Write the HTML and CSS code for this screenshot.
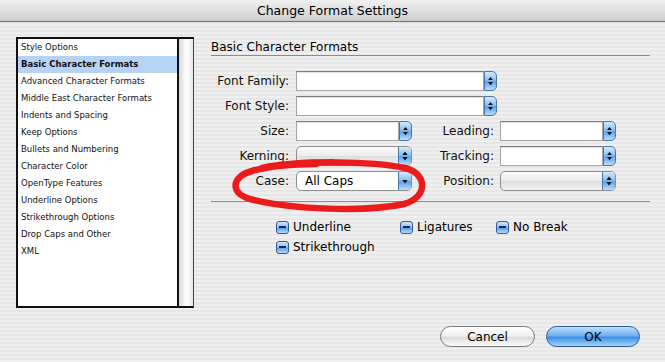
FILE: index.html
```html
<!DOCTYPE html>
<html>
<head>
  <title>Change Format Settings</title>
  <meta name="viewport" content="width=device-width, initial-scale=1">
  <link rel="stylesheet" href="styles.css">
</head>
<body>
  <div class="window">
    <div class="titlebar">Change Format Settings</div>

    <div class="content">
      <!-- category list on the left -->
      <div class="sidebar">
        <ul class="categories">
          <li>Style Options</li>
          <li class="selected">Basic Character Formats</li>
          <li>Advanced Character Formats</li>
          <li>Middle East Character Formats</li>
          <li>Indents and Spacing</li>
          <li>Keep Options</li>
          <li>Bullets and Numbering</li>
          <li>Character Color</li>
          <li>OpenType Features</li>
          <li>Underline Options</li>
          <li>Strikethrough Options</li>
          <li>Drop Caps and Other</li>
          <li>XML</li>
        </ul>
        <div class="scroll-track"></div>
      </div>

      <!-- settings panel -->
      <div class="panel">
        <h2 class="panel-title">Basic Character Formats</h2>

        <div class="form">
          <div class="row">
            <label class="label">Font Family:</label>
            <div class="field wide">
              <span class="input"></span>
              <span class="stepper"><svg viewBox="0 0 12 18" width="12" height="18"><path d="M6 4.5 L8.6 8 H3.4Z M6 13.5 L8.6 10 H3.4Z"/></svg></span>
            </div>
          </div>
          <div class="row">
            <label class="label">Font Style:</label>
            <div class="field wide">
              <span class="input"></span>
              <span class="stepper"><svg viewBox="0 0 12 18" width="12" height="18"><path d="M6 4.5 L8.6 8 H3.4Z M6 13.5 L8.6 10 H3.4Z"/></svg></span>
            </div>
          </div>
          <div class="row">
            <label class="label">Size:</label>
            <div class="field small">
              <span class="input"></span>
              <span class="stepper"><svg viewBox="0 0 12 18" width="12" height="18"><path d="M6 4.5 L8.6 8 H3.4Z M6 13.5 L8.6 10 H3.4Z"/></svg></span>
            </div>
            <label class="label second">Leading:</label>
            <div class="field small">
              <span class="input"></span>
              <span class="stepper"><svg viewBox="0 0 12 18" width="12" height="18"><path d="M6 4.5 L8.6 8 H3.4Z M6 13.5 L8.6 10 H3.4Z"/></svg></span>
            </div>
          </div>
          <div class="row">
            <label class="label">Kerning:</label>
            <div class="field small popup disabled">
              <span class="value"></span>
              <span class="stepper"><svg viewBox="0 0 12 18" width="12" height="18"><path d="M6 4.5 L8.6 8 H3.4Z M6 13.5 L8.6 10 H3.4Z"/></svg></span>
            </div>
            <label class="label second">Tracking:</label>
            <div class="field small">
              <span class="input"></span>
              <span class="stepper"><svg viewBox="0 0 12 18" width="12" height="18"><path d="M6 4.5 L8.6 8 H3.4Z M6 13.5 L8.6 10 H3.4Z"/></svg></span>
            </div>
          </div>
          <div class="row">
            <label class="label">Case:</label>
            <div class="field small popup">
              <span class="value">All Caps</span>
              <span class="stepper"><svg viewBox="0 0 12 18" width="12" height="18"><path d="M3.4 8 H8.6 L6 11.5Z"/></svg></span>
            </div>
            <label class="label second">Position:</label>
            <div class="field small popup disabled">
              <span class="value"></span>
              <span class="stepper"><svg viewBox="0 0 12 18" width="12" height="18"><path d="M6 4.5 L8.6 8 H3.4Z M6 13.5 L8.6 10 H3.4Z"/></svg></span>
            </div>
          </div>
        </div>

        <div class="options">
          <div class="option-row">
            <span class="check first"><span class="box"></span>Underline</span>
            <span class="check second"><span class="box"></span>Ligatures</span>
            <span class="check"><span class="box"></span>No Break</span>
          </div>
          <div class="option-row">
            <span class="check"><span class="box"></span>Strikethrough</span>
          </div>
        </div>

        <div class="buttons">
          <button class="btn cancel">Cancel</button>
          <button class="btn ok">OK</button>
        </div>
      </div>
    </div>

    <!-- hand drawn red mark round the Case popup -->
    <svg class="scribble" width="665" height="362" viewBox="0 0 665 362">
      <path d="M262 168 C300 160, 372 161, 405 168 C427 173, 429 197, 404 204 C368 212, 292 210, 250 199 C229 193, 232 176, 252 171 C270 166, 292 164, 316 164"/>
    </svg>
  </div>
</body>
</html>
```

FILE: styles.css
```css
/* page + window */
body {
  margin: 0;
  font-family: "DejaVu Sans", "Liberation Sans", sans-serif;
  color: #000;
}

.window {
  position: relative;
  width: 665px;
  height: 362px;
  overflow: hidden;
  display: flex;
  flex-direction: column;
  background: repeating-linear-gradient(#efefef 0, #efefef 2px, #e7e7e7 2px, #e7e7e7 4px);
}

/* title bar */
.titlebar {
  height: 21px;
  line-height: 21px;
  border-bottom: 1px solid #6e6e6e;
  background: linear-gradient(#f0f0f0, #dcdcdc 60%, #cdcdcd);
  text-align: center;
  font-size: 12.5px;
}

.content {
  flex: 1;
  display: flex;
}

/* category list */
.sidebar {
  box-sizing: border-box;
  width: 178px;
  height: 271px;
  margin: 15px 0 0 16px;
  display: flex;
  border: 2px solid #111;
  border-right: 1px solid #444;
  background: #fff;
}

.categories {
  flex: 1;
  list-style: none;
  margin: 0;
  padding: 0;
  border-right: 2px solid #111;
  font-size: 8.5px;
}

.categories li {
  height: 17px;
  line-height: 17px;
  padding-left: 3px;
  color: #111;
}

.categories li.selected {
  background: #b6d2f4;
  font-weight: bold;
}

.scroll-track {
  width: 14px;
  background: linear-gradient(90deg, #d6d6d6, #f7f7f7 40%, #ffffff 60%, #e8e8e8);
}

/* settings panel */
.panel {
  flex: 1;
  display: flex;
  flex-direction: column;
  margin: 0 15px 0 17px;
}

.panel-title {
  margin: 18px 0 0;
  font-size: 12px;
  font-weight: normal;
  line-height: 15px;
  border-bottom: 1px solid #8c8c8c;
}

.form {
  display: flex;
  flex-direction: column;
  gap: 5px;
  margin-top: 15px;
  padding-bottom: 10px;
  border-bottom: 1px solid #8c8c8c;
}

.row {
  display: flex;
  align-items: center;
  height: 20px;
}

.label {
  width: 78px;
  margin-right: 7px;
  text-align: right;
  font-size: 12px;
  color: #111;
}

.label.second {
  width: 82px;
  margin-left: 0;
  margin-right: 6px;
}

.field {
  box-sizing: border-box;
  height: 20px;
  display: flex;
}

.field.wide {
  width: 201px;
}

.field.small {
  width: 116px;
}

.field .input {
  flex: 1;
  background: #fff;
  border: 1px solid #a6a6a6;
  border-top-color: #7a7a7a;
  box-shadow: inset 0 1px 1px rgba(0, 0, 0, 0.12);
}

.stepper {
  box-sizing: border-box;
  width: 13px;
  height: 20px;
  display: flex;
  align-items: center;
  justify-content: center;
  border: 1px solid #4a76a8;
  border-radius: 0 5px 5px 0;
  background: linear-gradient(#d4eafd, #8cc0f2 45%, #5f9fe8 55%, #b9defc);
}

.stepper svg {
  fill: #111;
}

/* popup menus */
.field.popup {
  border: 1px solid #8e8e8e;
  border-radius: 5px;
  overflow: hidden;
  background: #fff;
}

.field.popup .value {
  flex: 1;
  padding-left: 8px;
  font-size: 12px;
  line-height: 18px;
}

.field.popup .stepper {
  height: 18px;
  border: none;
  border-left: 1px solid #4a76a8;
  border-radius: 0;
}

.field.popup.disabled {
  background: linear-gradient(#fbfbfb, #ececec 50%, #dedede 52%, #f2f2f2);
}

/* checkboxes */
.options {
  display: flex;
  flex-direction: column;
  margin-top: 15px;
  padding-left: 65px;
}

.option-row {
  display: flex;
  height: 20px;
  align-items: center;
}

.check {
  display: flex;
  align-items: center;
  gap: 4px;
  font-size: 12px;
}

.check.first {
  width: 124px;
}

.check.second {
  width: 96px;
}

.box {
  position: relative;
  box-sizing: border-box;
  width: 13px;
  height: 13px;
  border: 1px solid #34598a;
  border-radius: 3px;
  background: linear-gradient(#cfe7fd, #86bdf2 50%, #5d9de6 55%, #b6dbfb);
}

.box::after {
  content: "";
  position: absolute;
  left: 2px;
  top: 4px;
  width: 7px;
  height: 2px;
  background: #16284d;
}

/* buttons */
.buttons {
  margin-top: auto;
  display: flex;
  justify-content: flex-end;
  gap: 11px;
  padding: 0 10px 15px 0;
}

.btn {
  height: 21px;
  border-radius: 11px;
  font-family: "DejaVu Sans", "Liberation Sans", sans-serif;
  font-size: 12px;
  color: #000;
  padding: 0;
}

.btn.cancel {
  width: 95px;
  border: 1px solid #777;
  background: linear-gradient(#ffffff, #f1f1f1 45%, #dcdcdc 55%, #fbfbfb);
}

.btn.ok {
  width: 94px;
  border: 1px solid #2d5b92;
  background: linear-gradient(#bfe0fd, #6fb0f0 45%, #3d8fe6 55%, #a6d6ff);
}

/* red marker scribble */
.scribble {
  position: absolute;
  left: 0;
  top: 0;
  pointer-events: none;
}

.scribble path {
  fill: none;
  stroke: #ec1010;
  stroke-width: 6.5;
  stroke-linecap: round;
  stroke-linejoin: round;
  opacity: 0.95;
}
```
